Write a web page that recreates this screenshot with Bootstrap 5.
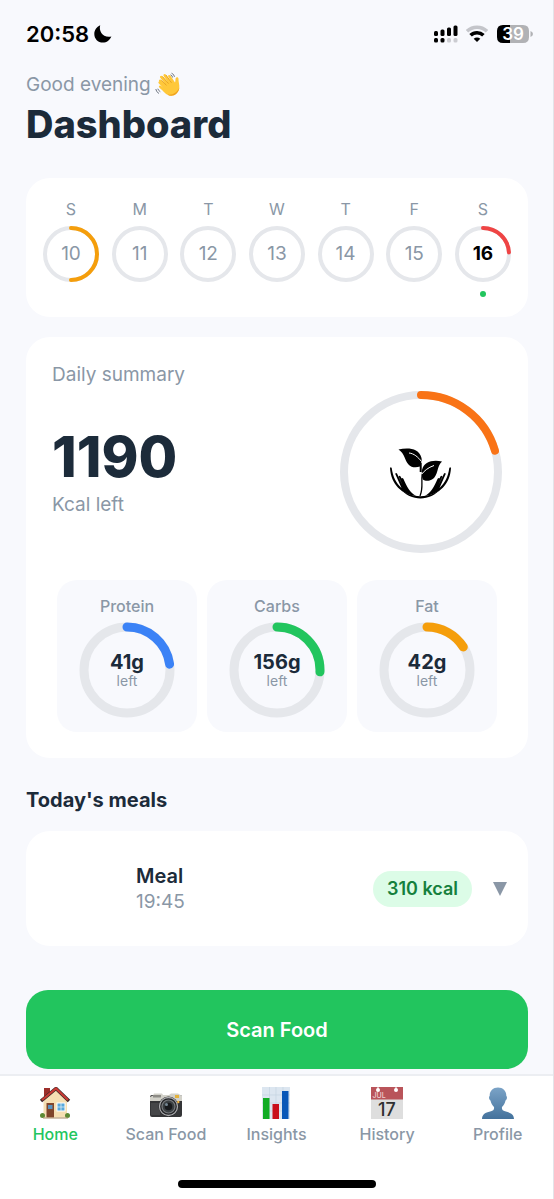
<!DOCTYPE html>
<html lang="en">
<head>
<meta charset="utf-8">
<meta name="viewport" content="width=device-width, initial-scale=1">
<title>Dashboard</title>
<link href="https://cdn.jsdelivr.net/npm/bootstrap@5.3.0/dist/css/bootstrap.min.css" rel="stylesheet">
<style>
  :root { --ink: #1c2b3a; --muted: #8a97a6; --track: #e5e7eb; --page: #f8f9fd; --green: #22c55e; }
  body { background: var(--page); color: var(--ink); font-family: Inter, "Liberation Sans", sans-serif; }
  .screen { border-right: 1px solid #e3e4e9; }
  .tone-muted { color: var(--muted); }
  .status { padding: 20px 20px 0 26px; height: 68px; }
  .clock { font-size: 22px; line-height: 28px; font-weight: 600; color: #000; }
  .content { padding: 0 25px 5px 26px; }
  .greeting { font-size: 19px; line-height: 34px; gap: 4px; }
  .title { font-size: 38px; line-height: 44px; font-weight: 800; margin: 0 0 32px; }
  .panel { background: #fff; border-radius: 24px; }
  .week { padding: 20px 17px; margin-bottom: 20px; }
  .day { width: 56px; font-size: 16px; line-height: 22px; }
  .day-num { font-size: 19px; line-height: 24px; }
  .day-dot { width: 6px; height: 6px; margin-top: 9px; background: var(--green); }
  .ring { position: relative; display: grid; place-items: center; margin: 0 auto; }
  .ring > svg { position: absolute; inset: 0; width: 100%; height: 100%; }
  .ring circle { fill: none; stroke: var(--track); }
  .ring .arc { stroke-linecap: round; }
  .ring-sm { width: 56px; height: 56px; margin-top: 6px; }
  .ring-md { width: 96px; height: 96px; }
  .ring-lg { width: 162px; height: 162px; margin: 28px 0 0; }
  .ring > .emblem { position: static; width: 62px; height: 54px; }
  .summary { padding: 26px; margin-bottom: 28px; }
  .caption { font-size: 19px; line-height: 24px; }
  .kcal { font-size: 56px; line-height: 56px; font-weight: 800; margin-top: 42px; }
  .macros { padding: 0 5px; gap: 10px; margin-top: 27px; }
  .macro { background: var(--page); border-radius: 20px; padding: 14px 0; flex: 1 1 0; }
  .macro-name { font-size: 16px; line-height: 24px; font-weight: 500; margin-bottom: 4px; }
  .macro-val { font-size: 20px; line-height: 22px; font-weight: 700; }
  .macro-left { font-size: 14px; line-height: 16px; }
  .section-title { font-size: 20px; line-height: 28px; font-weight: 700; margin: 0 0 17px; }
  .meal { min-height: 115px; padding: 0 20px 0 110px; margin-bottom: 44px; color: var(--ink); border: 0; }
  .meal-name { font-size: 20px; line-height: 26px; font-weight: 600; }
  .meal-time { font-size: 19px; line-height: 26px; }
  .kcal-pill { background: #dcfce7; color: #15803d; font-size: 18px; line-height: 24px; font-weight: 600; padding: 6px 14px; margin-right: 20px; }
  .scan { background: var(--green); color: #fff; border: 0; border-radius: 22px; height: 79px; font-size: 20px; font-weight: 600; }
  .scan:hover, .scan:active { background: #16a34a !important; color: #fff !important; }
  .tabs { background: #fff; border-top: 2px solid #eceef2; padding-top: 11px; }
  .tab { color: var(--muted); font-size: 16px; line-height: 24px; font-weight: 500; flex: 1 1 0; }
  .tab.active { color: var(--green); }
  .tab svg { width: 32px; height: 32px; margin-bottom: 3px; }
  .home-bar { width: 198px; height: 8px; background: #000; margin: 34px auto 11px; }
</style>
</head>
<body>
<div class="screen d-flex flex-column min-vh-100">
  <header class="status d-flex justify-content-between align-items-start">
    <div class="d-flex align-items-center gap-1">
      <span class="clock">20:58</span>
      <svg width="20" height="20" viewBox="0 0 20 20" aria-label="Do not disturb"><path d="M7.200 1.200C5.500 6.800 9.800 14.300 18.400 12.500C16.800 16.200 13.600 18.600 9.900 18.600C5 18.600 1.300 14.900 1.300 10C1.300 6 3.600 2.700 7.200 1.200Z"/></svg>
    </div>
    <div class="d-flex align-items-center gap-2 pt-1">
      <svg width="26" height="20" viewBox="0 0 26 20" aria-label="Signal">
        <g><rect x="2" y="7" width="4" height="5" rx="1.500"/><rect x="8.500" y="5.500" width="4" height="6.500" rx="1.500"/><rect x="15" y="3.500" width="4" height="8.500" rx="1.500"/><rect x="21.500" y="1.500" width="4" height="10.500" rx="1.500"/><rect x="2" y="14" width="4" height="4.500" rx="1.500"/><rect x="8.500" y="14" width="4" height="4.500" rx="1.500"/></g>
        <g fill="#cbccd1"><rect x="15" y="14" width="4" height="4.500" rx="1.500"/><rect x="21.500" y="14" width="4" height="4.500" rx="1.500"/></g>
      </svg>
      <svg width="22" height="18" viewBox="0 0 22 18" fill="none" stroke-width="3.600" aria-label="Wi-Fi"><path d="M1 6.300C6.500 .900 15.500 .900 21 6.300" stroke="#c4c5ca"/><path d="M4.600 10.300C8.200 6.800 13.800 6.800 17.400 10.300" stroke="#000"/><path d="M11 17L7.700 13.700C9.600 12 12.400 12 14.300 13.700Z" fill="#000"/></svg>
      <svg width="37" height="20" viewBox="0 0 37 20" aria-label="Battery 39 percent">
        <path d="M14 1H27Q33 1 33 7V13Q33 19 27 19H14Z" fill="#b1b2b5"/><path d="M14 1H7Q1 1 1 7V13Q1 19 7 19H14Z"/><path d="M34.500 7Q37 8 37 10T34.500 13Z" fill="#b1b2b5"/>
        <text x="17" y="16" text-anchor="middle" font-size="17" font-weight="600" fill="#fff">39</text>
      </svg>
    </div>
  </header>

  <main class="content">
    <div class="greeting tone-muted d-flex align-items-center">Good evening
      <svg width="26" height="26" viewBox="0 0 26 26" aria-label="Waving hand">
        <path d="M4.200 9.500C3.300 8 5 6.900 6.200 8L10.300 12L5.200 5.700C4.300 4.200 6.200 3 7.400 4.300L12.800 10.300L8.600 3.900C7.800 2.300 9.900 1.300 11 2.700L16 9.500L13.200 4.600C12.500 3 14.400 2.200 15.400 3.600L20 10.400C20.600 9.300 20.300 7.700 20.700 6.300C21.200 4.600 23.600 5 23.500 6.900C23.400 9.300 24.600 12.600 24.300 15.800C23.700 21.800 17.300 26 12.200 22.600C10.500 21.500 8.500 19.300 4.300 15.400C3.200 14.200 4.500 12.800 5.800 13.800L8 15.500L3.800 11.400C3 10.500 3.400 9.400 4.200 9.500Z" fill="#ffc83a"/>
        <path d="M6.300 8.200L11.500 13.300M7.500 4.500L13.500 11.600M11 3L16.500 10.800" stroke="#e29a1c" stroke-width=".8" fill="none"/><path d="M24.300 15.800C23.700 21.800 17.300 26 12.200 22.600C18 23.500 22 20.500 24.300 15.800Z" fill="#f0a21f"/>
        <path d="M16.500 1.200Q19 2 19.500 4.800M15.500 2.800Q17.300 3.500 17.600 5.500M.8 17Q1.200 20 4 21.500M2.800 16.700Q3.300 18.600 5.300 19.700" stroke="#707783" stroke-width="1" fill="none"/>
      </svg>
    </div>
    <h1 class="title">Dashboard</h1>

    <section class="panel week d-flex justify-content-between text-center" aria-label="Week">
      <div class="day tone-muted">S<div class="ring ring-sm"><svg viewBox="0 0 56 56"><circle cx="28" cy="28" r="26" stroke-width="4"/><circle class="arc" cx="28" cy="28" r="26" stroke-width="4" pathLength="100" stroke-dasharray="50 100" transform="rotate(-90 28 28)" style="stroke:#f59e0b"/></svg><span class="day-num">10</span></div></div>
      <div class="day tone-muted">M<div class="ring ring-sm"><svg viewBox="0 0 56 56"><circle cx="28" cy="28" r="26" stroke-width="4"/></svg><span class="day-num">11</span></div></div>
      <div class="day tone-muted">T<div class="ring ring-sm"><svg viewBox="0 0 56 56"><circle cx="28" cy="28" r="26" stroke-width="4"/></svg><span class="day-num">12</span></div></div>
      <div class="day tone-muted">W<div class="ring ring-sm"><svg viewBox="0 0 56 56"><circle cx="28" cy="28" r="26" stroke-width="4"/></svg><span class="day-num">13</span></div></div>
      <div class="day tone-muted">T<div class="ring ring-sm"><svg viewBox="0 0 56 56"><circle cx="28" cy="28" r="26" stroke-width="4"/></svg><span class="day-num">14</span></div></div>
      <div class="day tone-muted">F<div class="ring ring-sm"><svg viewBox="0 0 56 56"><circle cx="28" cy="28" r="26" stroke-width="4"/></svg><span class="day-num">15</span></div></div>
      <div class="day tone-muted">S<div class="ring ring-sm"><svg viewBox="0 0 56 56"><circle cx="28" cy="28" r="26" stroke-width="4"/><circle class="arc" cx="28" cy="28" r="26" stroke-width="4" pathLength="100" stroke-dasharray="24 100" transform="rotate(-90 28 28)" style="stroke:#ef4444"/></svg><span class="day-num fw-bold text-black">16</span></div><div class="day-dot rounded-circle mx-auto"></div></div>
    </section>

    <section class="panel summary">
      <div class="d-flex justify-content-between">
        <div>
          <div class="caption tone-muted">Daily summary</div>
          <div class="kcal">1190</div>
          <div class="caption tone-muted mt-2">Kcal left</div>
        </div>
        <div class="ring ring-lg">
          <svg viewBox="0 0 162 162"><circle cx="81" cy="81" r="77" stroke-width="8"/><circle class="arc" cx="81" cy="81" r="77" stroke-width="8" pathLength="100" stroke-dasharray="20.500 100" transform="rotate(-90 81 81)" style="stroke:#f97316"/></svg>
          <svg class="emblem" viewBox="0 -3 62 54" aria-label="Hands holding a sprout">
            <path d="M8.500 1.500C17 -.5 29 -.5 31.500 10C32.300 14 30.500 16 30 18.500C26 20 21 19.500 18.500 16.500C14.500 12 15 6 8.500 1.500Z"/>
            <path d="M19 5C24 5.500 28 9 31.500 13.500" stroke="#fff" stroke-width="1" fill="none"/>
            <path d="M52 13.500C46.500 18 48.500 28 42 31.500C38.500 33.500 35 33 32.800 31.500C31.800 29 31.500 25 32 22C34 14 42 11.500 52 13.500Z"/>
            <path d="M44 17.500C38 19.500 34 23 31 27" stroke="#fff" stroke-width="1" fill="none"/>
            <path d="M30.700 15V24" stroke="#000" stroke-width="2" fill="none"/>
            <path d="M32.200 26C31 34 33.500 40 30 48" stroke="#000" stroke-width="1.300" fill="none"/>
            <path d="M0 20Q.8 18.500 1.700 20C3 29 6 35 11.500 40L5.300 26Q5.600 24.500 7 25.500L12.500 37L8.700 28.500Q9.300 27 10.600 28.500L15.500 39L11.500 30.500Q12 29.200 13.400 30.700C17 39.500 20 44 26 48C12 46 1 37 0 20Z"/>
            <path d="M61 20Q60.200 18.500 59.300 20C58 29 55 35 49.500 40L55.700 26Q55.400 24.500 54 25.500L48.500 37L52.300 28.500Q51.700 27 50.400 28.500L45.500 39L49.500 30.500Q49 29.200 47.600 30.700C44 39.500 41 44 35 48C49 46 60 37 61 20Z"/>
            <path d="M9 40C22 54 39 54 52 40C40 51 21 51 9 40Z"/>
          </svg>
        </div>
      </div>
      <div class="macros d-flex text-center">
        <div class="macro"><div class="macro-name tone-muted">Protein</div>
          <div class="ring ring-md"><svg viewBox="0 0 96 96"><circle cx="48" cy="48" r="43" stroke-width="9"/><circle class="arc" cx="48" cy="48" r="43" stroke-width="9" pathLength="100" stroke-dasharray="22.800 100" transform="rotate(-90 48 48)" style="stroke:#3b82f6"/></svg><div><div class="macro-val">41g</div><div class="macro-left tone-muted">left</div></div></div></div>
        <div class="macro"><div class="macro-name tone-muted">Carbs</div>
          <div class="ring ring-md"><svg viewBox="0 0 96 96"><circle cx="48" cy="48" r="43" stroke-width="9"/><circle class="arc" cx="48" cy="48" r="43" stroke-width="9" pathLength="100" stroke-dasharray="25.700 100" transform="rotate(-90 48 48)" style="stroke:#22c55e"/></svg><div><div class="macro-val">156g</div><div class="macro-left tone-muted">left</div></div></div></div>
        <div class="macro"><div class="macro-name tone-muted">Fat</div>
          <div class="ring ring-md"><svg viewBox="0 0 96 96"><circle cx="48" cy="48" r="43" stroke-width="9"/><circle class="arc" cx="48" cy="48" r="43" stroke-width="9" pathLength="100" stroke-dasharray="16 100" transform="rotate(-90 48 48)" style="stroke:#f59e0b"/></svg><div><div class="macro-val">42g</div><div class="macro-left tone-muted">left</div></div></div></div>
      </div>
    </section>

    <h2 class="section-title">Today's meals</h2>
    <button type="button" class="panel meal w-100 d-flex align-items-center text-start" aria-expanded="false">
      <span class="me-auto"><span class="meal-name d-block">Meal</span><span class="meal-time d-block tone-muted">19:45</span></span>
      <span class="kcal-pill rounded-pill">310 kcal</span>
      <svg width="16" height="16" viewBox="0 0 16 16" aria-hidden="true"><path d="M1 1H15L8 15Z" fill="#8a97a6"/></svg>
    </button>
    <button type="button" class="btn scan w-100">Scan Food</button>
  </main>

  <footer class="tabs sticky-bottom mt-auto">
    <nav class="d-flex text-center" aria-label="Main">
      <a href="#" class="tab active text-decoration-none" aria-current="page">
        <svg class="d-block mx-auto" viewBox="0 0 32 32"><path d="M5 1H11V11L5 14Z" fill="#9c2f2b"/><path d="M4.500 13L17 3L28 13V30.500H4.500Z" fill="#f6dfb3"/><path d="M2 14L17 1.500L30 14" fill="none" stroke="#3b2b2b" stroke-width="3.500"/><path d="M3 13L17 1.500L29 13" fill="none" stroke="#c93b34" stroke-width="2.200"/><path d="M7.500 16H15V30.500H7.500Z" fill="#80452b"/><path d="M9 18H13.500V22H9Z" fill="#5a92bd"/><path d="M17.500 15.500H26.500V24.500H17.500Z" fill="#fff"/><path d="M18.500 16.500H25.500V23.500H18.500Z" fill="#58a9dc"/><path d="M22 16V24M18 20H26" stroke="#dcebf2" stroke-width=".8"/><circle cx="3.500" cy="28.500" r="2.500" fill="#5d8a34"/><circle cx="28.500" cy="28.500" r="2.500" fill="#5d8a34"/><path d="M4 31H29" stroke="#a98d69"/></svg>Home</a>
      <a href="#" class="tab text-decoration-none">
        <svg class="d-block mx-auto" viewBox="0 0 32 32"><rect y="8" width="32" height="22" rx="2" fill="#343537"/><path d="M0 14V10L3 8.500L4 6.500H12L13 8H19L21 6.500H28L32 9V14Z" fill="#d2d1c9"/><path d="M3 8H11V10.500H3Z" fill="#8d8c86"/><rect x="25" y="8" width="4" height="3" fill="#e3b23c"/><path d="M1 16H10V28H1Z" fill="#454648"/><circle cx="18.500" cy="19.500" r="10" fill="#222326"/><circle cx="18.500" cy="19.500" r="9" fill="none" stroke="#a9aaac" stroke-width="1.300"/><circle cx="18.500" cy="19.500" r="6.500" fill="#3b4043" stroke="#787b7e" stroke-width="1.200"/><circle cx="18.500" cy="19.500" r="3.800" fill="#17191c"/><circle cx="16.500" cy="17.500" r="1.500" fill="#758793"/><circle cx="28.300" cy="15" r="1.200" fill="#f3b544"/></svg>Scan Food</a>
      <a href="#" class="tab text-decoration-none">
        <svg class="d-block mx-auto" viewBox="0 0 32 32"><rect x="2" width="28" height="32" fill="#dce6f0"/><path d="M9.500 0V32M16 0V32M23 0V32M2 8H30M2 16H30M2 24H30" stroke="#c4d3e1" stroke-width=".7"/><rect x="3" y="11" width="6.500" height="21" fill="#12ac25"/><rect x="12.500" y="17" width="6.500" height="15" fill="#c90f1b"/><rect x="22" y="4" width="6.500" height="28" fill="#0857b8"/></svg>Insights</a>
      <a href="#" class="tab text-decoration-none">
        <svg class="d-block mx-auto" viewBox="0 0 32 32"><rect width="32" height="32" fill="#dedede"/><rect width="32" height="12.500" fill="#b9545a"/><path d="M7 0V3M25 0V3" stroke="#fff"/><circle cx="7" cy="3" r="2" fill="#fff"/><circle cx="25" cy="3" r="2" fill="#fff"/><text x="1.500" y="11" font-size="7" font-weight="500" fill="#efd0d1">JUL</text><text x="16" y="28.500" text-anchor="middle" font-size="18" font-weight="500" fill="#303030">17</text></svg>History</a>
      <a href="#" class="tab text-decoration-none">
        <svg class="d-block mx-auto" viewBox="0 0 32 32"><defs><linearGradient id="bust" x1="0" y1="0" x2="0" y2="1"><stop stop-color="#7ba3c7"/><stop offset="1" stop-color="#44729c"/></linearGradient></defs><path d="M16 .5C21 .5 24.500 4 24.300 9C25.500 9.500 25 13 23.500 13.500C23 16.500 21.500 18.500 20 20C19.500 22.500 21 23.500 23 24.300C28 25.700 31.700 26.500 32 32H0C.3 26.500 4 25.700 9 24.300C11 23.500 12.500 22.500 12 20C10.500 18.500 9 16.500 8.500 13.500C7 13 6.500 9.500 7.700 9C7.500 4 11 .5 16 .5Z" fill="url(#bust)"/></svg>Profile</a>
    </nav>
    <div class="home-bar rounded-pill"></div>
  </footer>
</div>
<script src="https://cdn.jsdelivr.net/npm/bootstrap@5.3.0/dist/js/bootstrap.bundle.min.js"></script>
</body>
</html>
